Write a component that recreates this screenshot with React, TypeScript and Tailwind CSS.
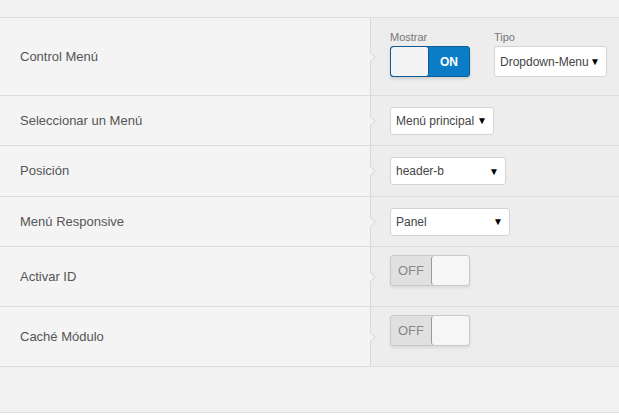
import React from "react";

const font = { fontFamily: '"Liberation Sans", Arial, sans-serif' };

function Row({ label, h, top, children }: { label: string; h: string; top?: boolean; children: React.ReactNode }) {
  return (
    <div className={`flex border-b border-[#dcdcdc] ${h}`}>
      <div className="w-[370px] shrink-0 bg-[#f4f4f4] flex items-center pl-[20px] text-[13px] text-[#555]">
        {label}
      </div>
      <div
        className={`relative flex-1 bg-[#ededed] border-l border-[#d9d9d9] flex pl-[19px] ${
          top ? "items-start pt-[8px]" : "items-center"
        }`}
      >
        <div className="absolute left-[-5px] top-1/2 -translate-y-1/2 w-[8px] h-[8px] rotate-45 bg-[#f4f4f4] border-t border-r border-[#d9d9d9]" />
        {children}
      </div>
    </div>
  );
}

function Select({ text, w }: { text: string; w: string }) {
  return (
    <div className={`${w} h-[28px] bg-white border border-[#d4d4d4] rounded-[3px] flex items-center justify-between pl-[5px] pr-[6px] text-[12px] text-[#444]`}>
      <span>{text}</span>
      <span className="text-[10px] text-black">▼</span>
    </div>
  );
}

function ToggleOn() {
  return (
    <div className="w-[80px] h-[31px] flex rounded-[3px] border border-[#0e5a94] bg-[#0a7dc6] shadow-[0_2px_3px_rgba(0,0,0,0.12)] overflow-hidden">
      <div className="w-[38px] bg-[#f4f4f4] border-r border-[#0e5a94] rounded-[3px]" />
      <div className="flex-1 flex items-center justify-center text-white font-bold text-[12px]">ON</div>
    </div>
  );
}

function ToggleOff() {
  return (
    <div className="w-[80px] h-[31px] flex rounded-[3px] border border-[#c8c8c8] bg-[#e0e0e0] shadow-[0_2px_3px_rgba(0,0,0,0.08)] overflow-hidden">
      <div className="w-[40px] flex items-center justify-center text-[#888] text-[13px]">OFF</div>
      <div className="flex-1 bg-[#f6f6f6] border-l border-[#9a9a9a] rounded-[3px]" />
    </div>
  );
}

export default function App() {
  return (
    <div className="w-[619px] h-[417px] bg-white overflow-hidden" style={font}>
      <div className="h-[18px] bg-[#f2f2f2] border-b border-[#dcdcdc]" />
      <Row label="Control Menú" h="h-[78px]">
        <div className="flex gap-[24px] -mt-[5px]">
          <div className="flex flex-col">
            <span className="text-[11px] text-[#777] leading-[13px] mb-[2px]">Mostrar</span>
            <ToggleOn />
          </div>
          <div className="flex flex-col">
            <span className="text-[11px] text-[#777] leading-[13px] mb-[2px]">Tipo</span>
            <Select text="Dropdown-Menu" w="w-[113px] h-[31px]" />
          </div>
        </div>
      </Row>
      <Row label="Seleccionar un Menú" h="h-[50px]">
        <Select text="Menú principal" w="w-[104px]" />
      </Row>
      <Row label="Posición" h="h-[51px]">
        <Select text="header-b" w="w-[116px]" />
      </Row>
      <Row label="Menú Responsive" h="h-[50px]">
        <Select text="Panel" w="w-[120px]" />
      </Row>
      <Row label="Activar ID" h="h-[60px]" top>
        <ToggleOff />
      </Row>
      <Row label="Caché Módulo" h="h-[60px]" top>
        <ToggleOff />
      </Row>
      <div className="h-[46px] bg-[#f1f1f1] border-b border-[#dcdcdc]" />
    </div>
  );
}
